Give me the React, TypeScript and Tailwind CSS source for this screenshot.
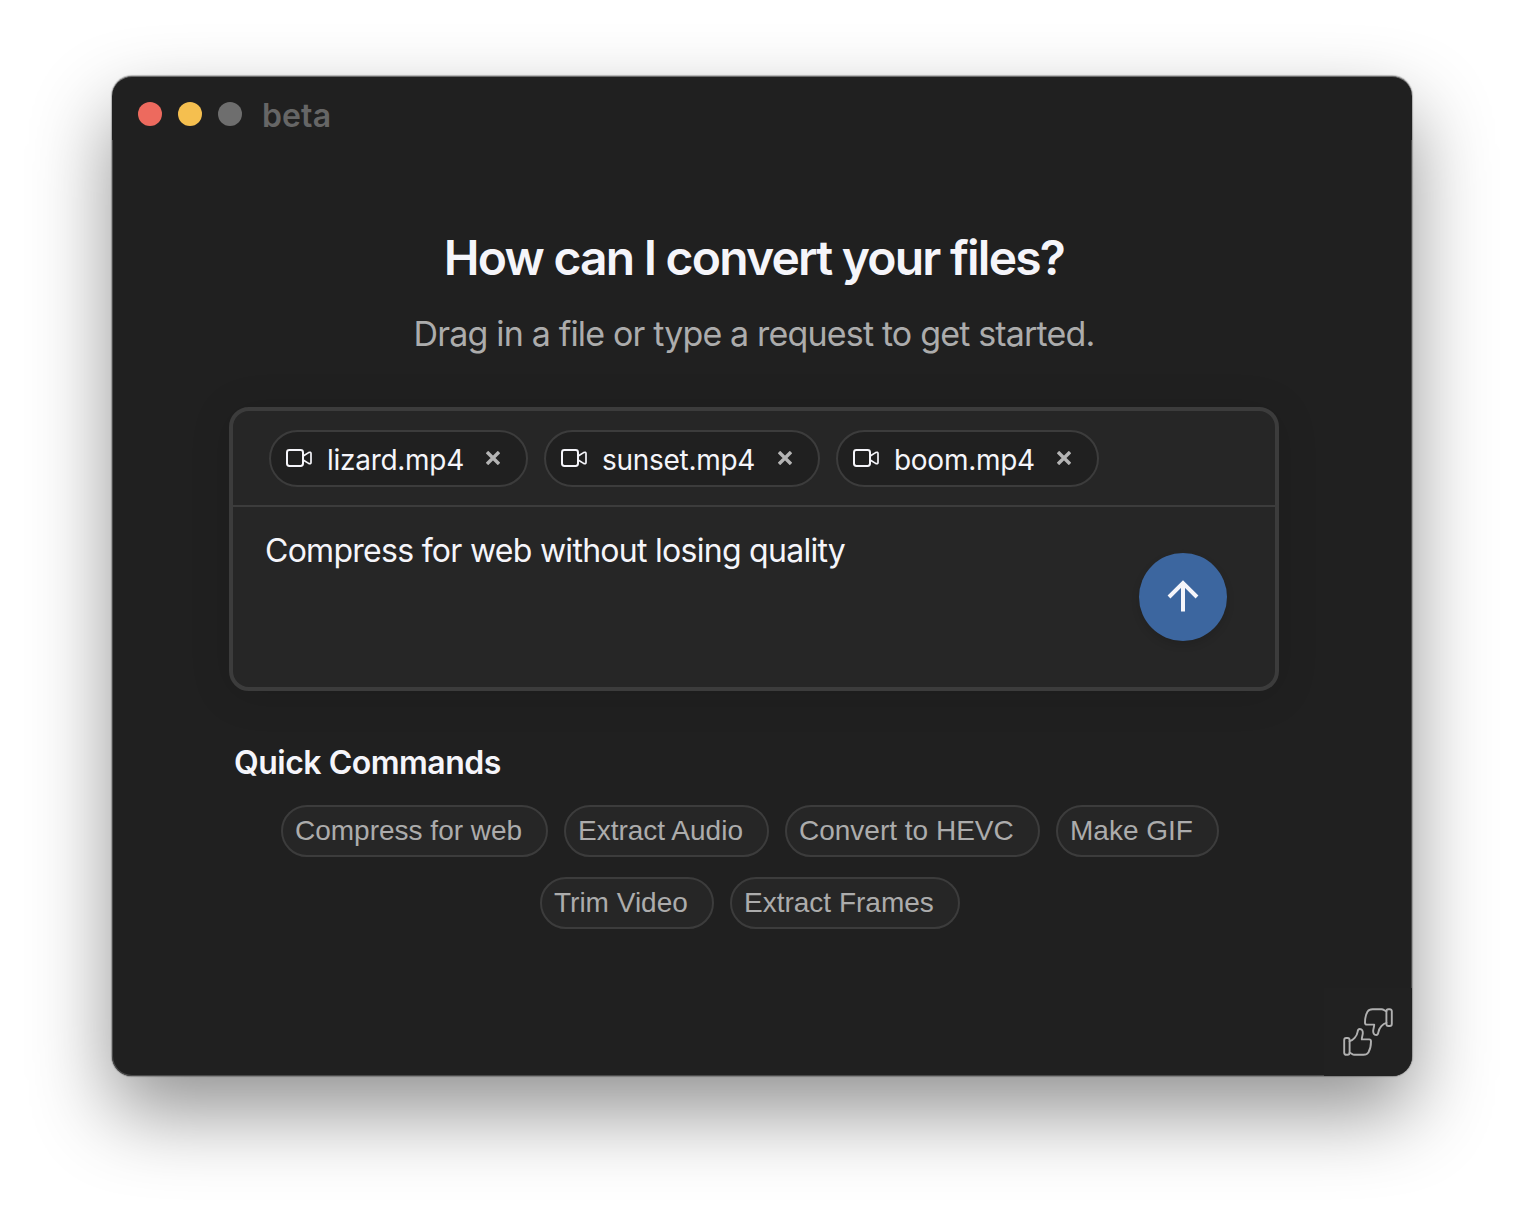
import React from "react";

const files = [
  { name: "lizard.mp4", chip: "w-[259px]" },
  { name: "sunset.mp4", chip: "w-[276px]" },
  { name: "boom.mp4", chip: "w-[263px]" },
];

const commands = [
  [
    { name: "Compress for web", width: "w-[267px]" },
    { name: "Extract Audio", width: "w-[205px]" },
    { name: "Convert to HEVC", width: "w-[255px]" },
    { name: "Make GIF", width: "w-[163px]" },
  ],
  [
    { name: "Trim Video", width: "w-[174px]" },
    { name: "Extract Frames", width: "w-[230px]" },
  ],
];

function VideoIcon() {
  return (
    <svg width="28" height="20" viewBox="0 0 28 20" fill="none" stroke="#f5f5fa" strokeWidth="2" strokeLinejoin="round" className="mb-px shrink-0">
      <rect x="2" y="2" width="16" height="16" rx="2.4" />
      <path d="M18.6 7.8L23.6 4.6Q26 3.6 26 5.4V14.6Q26 16.4 23.6 15.4L18.6 12.2" strokeWidth="1.7" />
    </svg>
  );
}

function CloseIcon() {
  return (
    <svg width="14" height="14" viewBox="0 0 14 14" stroke="#b4b4b4" strokeWidth="3.4" className="mb-0.5 shrink-0">
      <path d="M1 1L13 13M13 1L1 13" />
    </svg>
  );
}

function Thumb({ className }: { className: string }) {
  return (
    <svg width="29" height="28" viewBox="0 0 29 28" fill="none" stroke="#b0b0b0" strokeWidth="1.9" strokeLinejoin="round" strokeLinecap="round" className={className}>
      <rect x="1.2" y="10" width="5.4" height="16.8" rx="2" />
      <path d="M6.6 13.2C10 12.4 14 8.2 14.6 3.8C14.8 1.8 15.6 1 16.8 1C19 1 20 3 19.8 5.4C19.6 7.6 18.8 9 18.8 11.4H26.2C27.6 11.4 28 12.4 28 13.6C28 17.6 27.2 21.4 25.4 24.4C24.4 26.2 22.6 26.8 20.4 26.8H11.4C9.4 26.8 8.4 25 6.6 24.6" />
    </svg>
  );
}

export default function App() {
  return (
    <div className="h-[1224px] w-[1524px] overflow-hidden bg-white px-[112px] pt-[76px] font-['Inter',sans-serif]">
      <div className="relative flex h-[1000px] w-[1300px] flex-col rounded-[20px] border-t border-[#6b6b6b] bg-[#202020] shadow-[0_0_1px_1px_rgba(0,0,0,0.25),0_36px_80px_rgba(0,0,0,0.43)]">
        <header className="flex h-[63px] shrink-0 items-center pt-[11px] pl-[26px]">
          <div className="flex gap-4">
            <span className="size-6 rounded-full bg-[#ed6a5e]" />
            <span className="size-6 rounded-full bg-[#f5bf4f]" />
            <span className="size-6 rounded-full bg-[#6e6e6e]" />
          </div>
          <span className="mt-[3px] ml-5 text-[32px] leading-8 font-semibold tracking-[0.1px] text-[#666666]">beta</span>
        </header>
        <main className="flex flex-1 flex-col rounded-b-[20px] border-x border-b border-[#4a4a4a] pt-[88px] pl-[116px]">
          <div className="flex w-[1050px] flex-col">
            <h1 className="self-center whitespace-nowrap text-[48px] leading-[60px] font-semibold tracking-[-1.78px] text-[#f5f5fa]">How can I convert your files?</h1>
            <p className="mt-[26px] self-center whitespace-nowrap text-[34px] leading-[40px] tracking-[-0.83px] text-[#acacac]">Drag in a file or type a request to get started.</p>
            <section className="mt-[53px] flex h-[284px] flex-col rounded-[20px] border-4 border-[#3c3c3c] bg-[#262626] shadow-[0_4px_40px_rgba(0,0,0,0.13)]">
              <div className="flex h-[96px] shrink-0 gap-4 border-b-2 border-[#3c3c3c] pt-[19px] pl-9">
                {files.map((f) => (
                  <div key={f.name} className={`flex h-[57px] items-center rounded-full border-2 border-[#3c3c3c] bg-[#202020] pr-[26px] pl-[14px] ${f.chip}`}>
                    <VideoIcon />
                    <span className="mt-0.5 ml-[14px] flex-1 whitespace-nowrap text-[28px] leading-8 tracking-[-0.28px] text-[#f5f5fa]">{f.name}</span>
                    <CloseIcon />
                  </div>
                ))}
              </div>
              <div className="flex flex-1 justify-between pr-12 pl-8">
                <p className="mt-6 whitespace-nowrap text-[32px] leading-10 tracking-[-0.72px] text-[#f5f5fa]">Compress for web without losing quality</p>
                <button className="mt-[46px] flex size-[88px] items-center justify-center rounded-full bg-[#3c669f] shadow-[0_4px_8px_rgba(0,0,0,0.12)]">
                  <svg width="32" height="32" viewBox="0 0 32 32" fill="none" stroke="#f5f5fa" strokeWidth="4" className="mb-[3px]">
                    <path d="M16 31.5V3M2 17L16 3L30 17" />
                  </svg>
                </button>
              </div>
            </section>
            <h2 className="mt-[51px] ml-[5px] whitespace-nowrap text-[32px] leading-[42px] font-semibold tracking-[-0.5px] text-[#f5f5fa]">Quick Commands</h2>
            <div className="mt-[21px] flex flex-col gap-5">
              {commands.map((row, i) => (
                <div key={i} className="flex w-[1042px] justify-center gap-4">
                  {row.map((c) => (
                    <button key={c.name} className={`flex h-[52px] items-center whitespace-nowrap rounded-full border-2 border-[#3c3c3c] bg-[#262626] pl-3 font-['Liberation_Sans',Arial,sans-serif] text-[28px] leading-8 text-[#acacac] ${c.width}`}>{c.name}</button>
                  ))}
                </div>
              ))}
            </div>
          </div>
        </main>
        <aside className="absolute right-0 bottom-0 h-[88px] w-[88px] rounded-br-[20px] bg-[#212121]">
          <Thumb className="absolute top-[40px] left-[19px]" />
          <Thumb className="absolute top-[20px] left-[40px] rotate-180" />
        </aside>
      </div>
    </div>
  );
}
